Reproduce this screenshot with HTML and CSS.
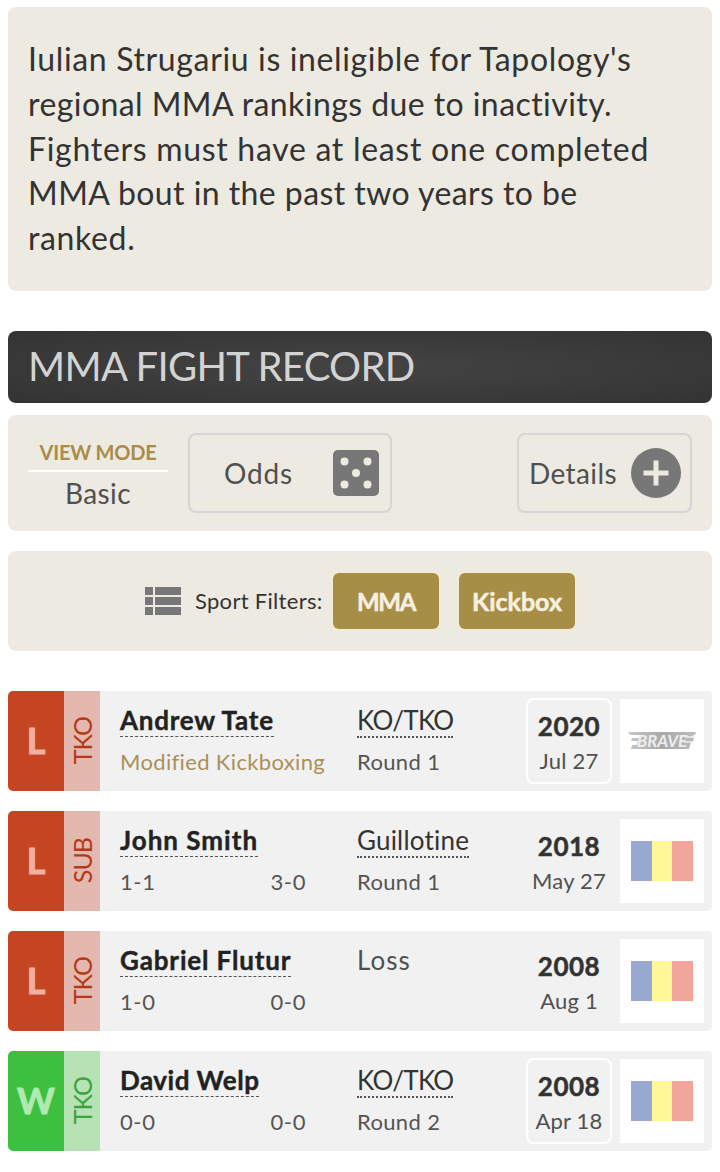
FILE: index.html
```html
<!DOCTYPE html>
<html lang="en">
  <head>
    <meta charset="UTF-8" />
    <meta name="viewport" content="width=device-width, initial-scale=1.0" />
    <title>MMA Fight Record</title>
    <link rel="stylesheet" href="styles.css">
  </head>
  <body>
    <div class="notice">
      Iulian Strugariu is ineligible for Tapology's<br>
      <span class="tight">regional MMA rankings due to inactivity.</span><br>
      <span class="loose">Fighters must have at least one completed</span><br>
      <span class="tight">MMA bout in the past two years to be</span><br>
      ranked.
    </div>

    <h2 class="section-title"><span>MMA FIGHT RECORD</span></h2>

    <div class="view-panel">
      <div class="view-mode">
        <div class="view-label">VIEW MODE</div>
        <div class="view-value">Basic</div>
      </div>
      <div class="toggle odds">
        <span>Odds</span>
        <svg width="46" height="46" viewBox="0 0 46 46">
          <rect width="46" height="46" rx="5" fill="#777" />
          <g fill="#edeae1">
            <circle cx="11.5" cy="11.5" r="4" />
            <circle cx="34.5" cy="11.5" r="4" />
            <circle cx="23" cy="23" r="4" />
            <circle cx="11.5" cy="34.5" r="4" />
            <circle cx="34.5" cy="34.5" r="4" />
          </g>
        </svg>
      </div>
      <div class="toggle details">
        <span>Details</span>
        <svg width="50" height="50" viewBox="0 0 50 50">
          <circle cx="25" cy="25" r="25" fill="#777" />
          <path d="M12.5 25h25M25 12.5v25" stroke="#edeae1" stroke-width="5" />
        </svg>
      </div>
    </div>

    <div class="filter-panel">
      <svg width="36" height="28" viewBox="0 0 36 28" fill="#777">
        <path d="M0 0h8v8H0zM10 0h26v8H10zM0 10h8v8H0zM10 10h26v8H10zM0 20h8v8H0zM10 20h26v8H10z" />
      </svg>
      <span class="filter-label">Sport Filters:</span>
      <button class="filter mma">MMA</button>
      <button class="filter kickbox">Kickbox</button>
    </div>

    <div class="bout loss">
      <div class="result">L</div>
      <div class="method-tag"><span>TKO</span></div>
      <div class="opponent">
        <a class="name tate">Andrew Tate</a>
        <div class="sub sport">Modified Kickboxing</div>
      </div>
      <div class="finish">
        <a class="method">KO/TKO</a>
        <div class="sub">Round 1</div>
      </div>
      <div class="date boxed">
        <div class="year">2020</div>
        <div class="day">Jul 27</div>
      </div>
      <div class="promo">
        <svg width="70" height="24" viewBox="0 0 70 24">
          <defs>
            <linearGradient id="metal" x1="0" y1="0" x2="1" y2="0">
              <stop offset="0" stop-color="#c9c9c9" />
              <stop offset="0.5" stop-color="#a8a8a8" />
              <stop offset="1" stop-color="#bdbdbd" />
            </linearGradient>
          </defs>
          <path d="M1 3h68l-1 3h-2l-1 3h2l-1 4h-2l-2 7H4l1-4h5l1-4H4l1-3h8l1-3H3z" fill="url(#metal)" />
          <path d="M58 8h9M57 13h9" stroke="#eee" stroke-width="1.5" />
          <text class="brave" x="10" y="18" textLength="50" lengthAdjust="spacingAndGlyphs">BRAVE</text>
        </svg>
      </div>
    </div>

    <div class="bout loss">
      <div class="result">L</div>
      <div class="method-tag"><span>SUB</span></div>
      <div class="opponent">
        <a class="name smith">John Smith</a>
        <div class="sub records"><span>1-1</span><span>3-0</span></div>
      </div>
      <div class="finish">
        <a class="method guillotine">Guillotine</a>
        <div class="sub">Round 1</div>
      </div>
      <div class="date">
        <div class="year">2018</div>
        <div class="day">May 27</div>
      </div>
      <div class="promo"><div class="flag"></div></div>
    </div>

    <div class="bout loss">
      <div class="result">L</div>
      <div class="method-tag"><span>TKO</span></div>
      <div class="opponent">
        <a class="name flutur">Gabriel Flutur</a>
        <div class="sub records"><span>1-0</span><span>0-0</span></div>
      </div>
      <div class="finish">
        <span class="method plain">Loss</span>
      </div>
      <div class="date">
        <div class="year">2008</div>
        <div class="day">Aug 1</div>
      </div>
      <div class="promo"><div class="flag"></div></div>
    </div>

    <div class="bout win">
      <div class="result">W</div>
      <div class="method-tag"><span>TKO</span></div>
      <div class="opponent">
        <a class="name welp">David Welp</a>
        <div class="sub records"><span>0-0</span><span>0-0</span></div>
      </div>
      <div class="finish">
        <a class="method">KO/TKO</a>
        <div class="sub">Round 2</div>
      </div>
      <div class="date boxed">
        <div class="year">2008</div>
        <div class="day">Apr 18</div>
      </div>
      <div class="promo"><div class="flag"></div></div>
    </div>
  </body>
</html>
```

FILE: styles.css
```css
* {
  box-sizing: border-box;
}
body {
  margin: 0;
  padding: 7px 8px 0;
  background: #fff;
  color: #333;
  font-family: Lato, "Noto Sans", sans-serif;
  font-variant-ligatures: none;
}
.notice {
  height: 284px;
  padding: 30px 20px;
  border-radius: 8px;
  background: #edeae1;
  font-size: 32px;
  letter-spacing: 0.64px;
  line-height: 44.8px;
  white-space: nowrap;
}
.tight {
  letter-spacing: 0.43px;
}
.loose {
  letter-spacing: 0.7px;
}
.section-title {
  height: 72px;
  margin: 40px 0 12px;
  padding-left: 20px;
  border-radius: 8px;
  background: radial-gradient(ellipse at center, #444 0%, #333 100%);
  color: #d3d3d3;
  font-size: 40px;
  font-weight: 400;
  letter-spacing: -0.7px;
  line-height: 71px;
}
.view-panel {
  display: flex;
  height: 116px;
  padding: 18px 20px;
  border-radius: 8px;
  background: #edeae1;
  color: #505050;
  font-size: 28px;
  letter-spacing: 0.4px;
}
.view-mode {
  width: 140px;
  margin-right: 20px;
  text-align: center;
}
.view-label {
  height: 39px;
  border-bottom: 2px solid #fff;
  color: #aa8b48;
  font-size: 20px;
  font-weight: 700;
  letter-spacing: -0.2px;
  line-height: 39px;
}
.view-value {
  line-height: 43px;
}
.toggle {
  display: flex;
  align-items: center;
  justify-content: space-between;
  height: 80px;
  border: 2px solid #d5d5d5;
  border-radius: 8px;
}
.odds {
  width: 204px;
  padding: 0 11px 0 34px;
  letter-spacing: 0.8px;
}
.details {
  width: 175px;
  margin-left: auto;
  padding: 0 9px 0 10px;
}
.filter-panel {
  display: flex;
  align-items: center;
  height: 100px;
  margin: 20px 0 40px;
  padding-left: 137px;
  border-radius: 8px;
  background: #edeae1;
}
.filter-label {
  width: 128px;
  margin: -2px 10px 0 14px;
  font-size: 22px;
  letter-spacing: 0.3px;
  white-space: nowrap;
}
.filter {
  width: 106px;
  height: 56px;
  margin-right: 20px;
  padding: 0;
  border: none;
  border-radius: 6px;
  background: #a68e47;
  box-shadow: 0 0 2px 1px #f8ecce;
  color: #f7f0e0;
  font-family: inherit;
  font-size: 25px;
  font-weight: 700;
  -webkit-text-stroke: 0.5px;
}
.mma {
  font-size: 24px;
  letter-spacing: -1.3px;
}
.kickbox {
  width: 116px;
}
.bout {
  display: flex;
  height: 100px;
  margin-bottom: 20px;
  border-radius: 5px;
  background: #f1f1f1;
  overflow: hidden;
}
.result {
  width: 56px;
  font-size: 36px;
  font-weight: 700;
  line-height: 99px;
  text-align: center;
  -webkit-text-stroke: 1px;
}
.method-tag {
  display: flex;
  align-items: center;
  justify-content: center;
  width: 36px;
  margin-right: 20px;
  font-size: 25px;
  letter-spacing: -1px;
}
.method-tag span {
  line-height: 36px;
  writing-mode: vertical-rl;
  transform: rotate(180deg);
}
.loss .result {
  background: #c54522;
  color: #f1b09f;
}
.loss .method-tag {
  background: #e3b9af;
  color: #b8381a;
}
.win .result {
  background: #3dc03f;
  color: #b0eab0;
}
.win .method-tag {
  background: #b6e2b5;
  color: #3ca43c;
}
.opponent {
  width: 237px;
  padding-top: 14px;
}
.name,
.method {
  display: inline-block;
  height: 32px;
  font-size: 26px;
  line-height: 31px;
  vertical-align: top;
  white-space: nowrap;
}
.name {
  border-bottom: 1px dashed #555;
  color: #222;
  font-weight: 700;
  letter-spacing: 0.75px;
  -webkit-text-stroke: 0.4px;
}
.smith {
  letter-spacing: 1px;
}
.flutur {
  letter-spacing: 0.85px;
}
.welp {
  letter-spacing: 0.5px;
}
.method {
  height: 33px;
  border-bottom: 2px dotted #555;
  letter-spacing: -0.7px;
}
.guillotine {
  letter-spacing: 0.2px;
}
.plain {
  border: none;
  color: #505050;
  letter-spacing: 1px;
}
.sub {
  margin-top: 10px;
  color: #555;
  font-size: 22px;
  letter-spacing: 0.35px;
  line-height: 29px;
  white-space: nowrap;
}
.finish .sub {
  margin-top: 9px;
}
.sport {
  color: #aa9058;
}
.records {
  display: flex;
  justify-content: space-between;
  width: 186px;
  letter-spacing: 0.6px;
}
.finish {
  width: 169px;
  padding-top: 14px;
}
.date {
  width: 86px;
  height: 86px;
  margin: 7px 8px 0 0;
  padding-top: 9px;
  border: 2px solid transparent;
  border-radius: 8px;
  text-align: center;
  white-space: nowrap;
}
.boxed {
  border-color: #fff;
}
.year {
  font-size: 26px;
  font-weight: 700;
  letter-spacing: 0.5px;
  line-height: 35px;
  -webkit-text-stroke: 0.5px;
}
.day {
  color: #505050;
  font-size: 22px;
  letter-spacing: 0.2px;
  line-height: 33px;
}
.promo {
  display: flex;
  align-items: center;
  justify-content: center;
  width: 84px;
  height: 84px;
  margin-top: 8px;
  background: #fff;
}
.flag {
  width: 62px;
  height: 40px;
  background: linear-gradient(90deg, #99a8d0 0 33.8%, #fff798 33.8% 66.8%, #f2a59b 66.8%);
}
.brave {
  fill: #eee;
  font-size: 17px;
  font-style: italic;
  font-weight: 700;
}
```
